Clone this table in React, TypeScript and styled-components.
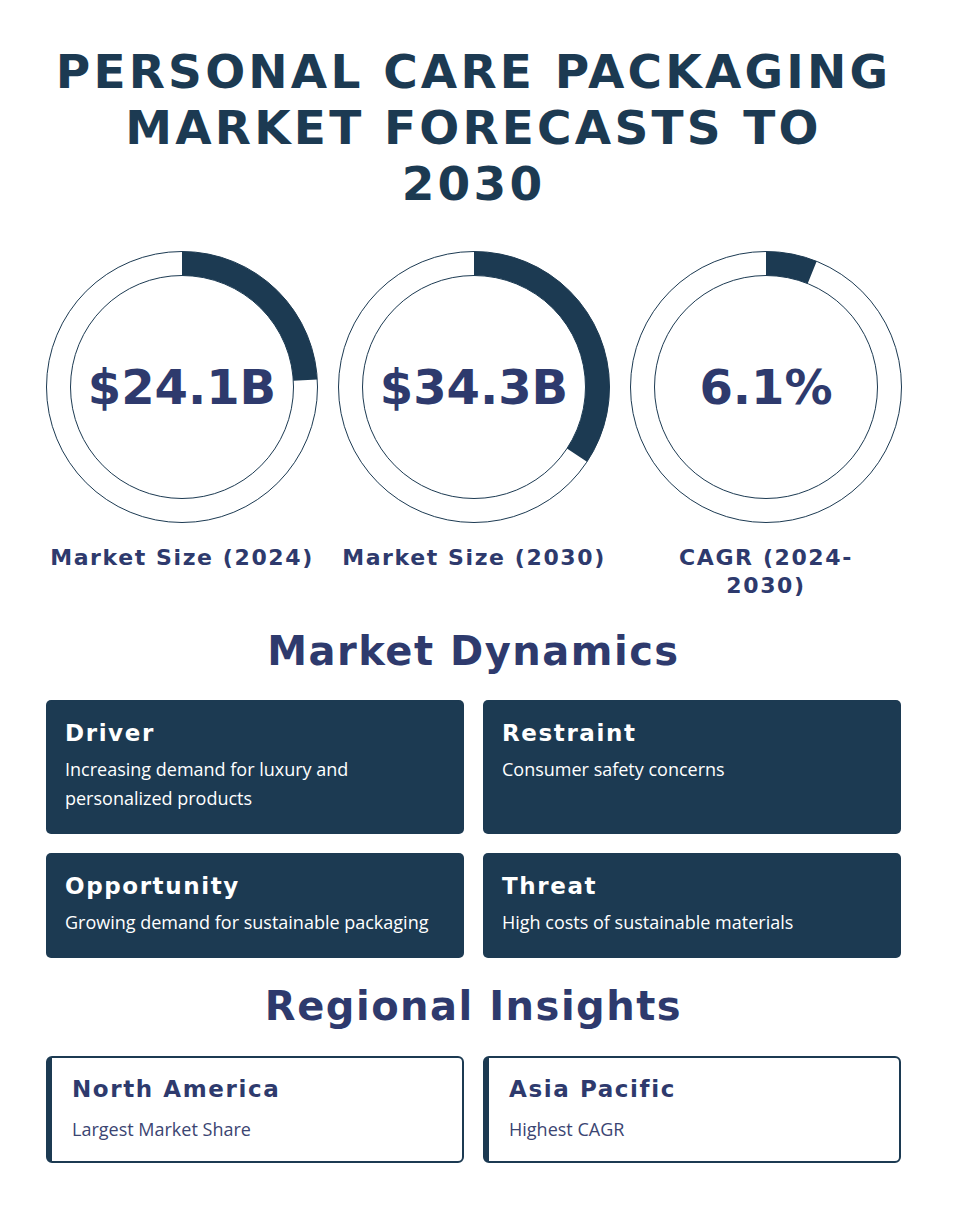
import styled, { createGlobalStyle } from 'styled-components'

const navy = '#1c3a52'
const indigo = '#2e3a6d'
const display = '"DejaVu Sans", "Liberation Sans", sans-serif'
const body = '"Open Sans", "Noto Sans", sans-serif'

const GlobalStyle = createGlobalStyle`
  html, body {
    margin: 0;
    padding: 0;
    background: #ffffff;
  }
`

const Page = styled.main`
  width: 855px;
  margin-left: 46px;
  padding: 44px 0 48px;
  display: flex;
  flex-direction: column;
`

const Title = styled.h1`
  margin: 0;
  font-family: ${display};
  font-weight: 700;
  font-size: 47px;
  line-height: 56px;
  letter-spacing: 3.2px;
  color: ${navy};
  text-align: center;
  text-transform: uppercase;
`

const Stats = styled.section`
  margin-top: 39px;
  display: grid;
  grid-template-columns: repeat(3, 1fr);
  column-gap: 20px;
`

const Stat = styled.div`
  display: flex;
  flex-direction: column;
  align-items: center;
`

const Ring = styled.div`
  position: relative;
  width: 272px;
  height: 272px;
`

const RingValue = styled.span`
  position: absolute;
  inset: 0;
  display: flex;
  align-items: center;
  justify-content: center;
  font-family: ${display};
  font-weight: 700;
  font-size: 48px;
  letter-spacing: 0;
  color: ${indigo};
`

const StatLabel = styled.div`
  margin-top: 21px;
  font-family: ${display};
  font-weight: 700;
  font-size: 22px;
  line-height: 28px;
  letter-spacing: 1.6px;
  color: ${indigo};
  text-align: center;
  white-space: nowrap;
`

const SectionTitle = styled.h2<{ $gap: number }>`
  margin: ${({ $gap }) => $gap}px 0 0;
  font-family: ${display};
  font-weight: 700;
  font-size: 40px;
  line-height: 48px;
  letter-spacing: 1.5px;
  color: ${indigo};
  text-align: center;
`

const CardGrid = styled.section`
  margin-top: 25px;
  display: grid;
  grid-template-columns: 1fr 1fr;
  gap: 19px;
`

const DarkCard = styled.div`
  background: ${navy};
  border-radius: 5px;
  padding: 18px 19px 21px;
`

const CardTitle = styled.h3<{ $light?: boolean }>`
  margin: 0;
  font-family: ${display};
  font-weight: 700;
  font-size: 23px;
  line-height: 30px;
  letter-spacing: 1.6px;
  color: ${({ $light }) => ($light ? '#ffffff' : indigo)};
`

const CardText = styled.p<{ $light?: boolean; $gap?: number }>`
  margin: ${({ $gap }) => $gap ?? 7}px 0 0;
  font-family: ${body};
  font-size: 18px;
  line-height: 29px;
  color: ${({ $light }) => ($light ? '#ffffff' : '#3b4572')};
`

const RegionGrid = styled.section`
  margin-top: 26px;
  display: grid;
  grid-template-columns: 1fr 1fr;
  gap: 19px;
`

const RegionCard = styled.div`
  border: 2px solid ${navy};
  border-left-width: 6px;
  border-radius: 6px;
  padding: 16px 20px 17px;
`

interface StatData {
  value: string
  label: React.ReactNode
  percent: number
}

const stats: StatData[] = [
  { value: '$24.1B', label: 'Market Size (2024)', percent: 24.1 },
  { value: '$34.3B', label: 'Market Size (2030)', percent: 34.3 },
  {
    value: '6.1%',
    label: (
      <>
        CAGR (2024-
        <br />
        2030)
      </>
    ),
    percent: 6.1,
  },
]

const dynamics = [
  { title: 'Driver', text: 'Increasing demand for luxury and personalized products' },
  { title: 'Restraint', text: 'Consumer safety concerns' },
  { title: 'Opportunity', text: 'Growing demand for sustainable packaging' },
  { title: 'Threat', text: 'High costs of sustainable materials' },
]

const regions = [
  { title: 'North America', text: 'Largest Market Share' },
  { title: 'Asia Pacific', text: 'Highest CAGR' },
]

function Donut({ percent }: { percent: number }) {
  const r = 123.5
  const c = 2 * Math.PI * r
  return (
    <svg width="272" height="272" viewBox="0 0 272 272">
      <circle cx="136" cy="136" r="135.5" fill="none" stroke={navy} strokeWidth="1" />
      <circle cx="136" cy="136" r="111.5" fill="none" stroke={navy} strokeWidth="1" />
      <circle
        cx="136"
        cy="136"
        r={r}
        fill="none"
        stroke={navy}
        strokeWidth="24"
        strokeDasharray={`${(c * percent) / 100} ${c}`}
        transform="rotate(-90 136 136)"
      />
    </svg>
  )
}

export default function App() {
  return (
    <>
      <GlobalStyle />
      <Page>
        <Title>
          Personal Care Packaging
          <br />
          Market Forecasts to
          <br />
          2030
        </Title>

        <Stats>
          {stats.map((s, i) => (
            <Stat key={i}>
              <Ring>
                <Donut percent={s.percent} />
                <RingValue>{s.value}</RingValue>
              </Ring>
              <StatLabel>{s.label}</StatLabel>
            </Stat>
          ))}
        </Stats>

        <SectionTitle $gap={27}>Market Dynamics</SectionTitle>
        <CardGrid>
          {dynamics.map((d) => (
            <DarkCard key={d.title}>
              <CardTitle $light>{d.title}</CardTitle>
              <CardText $light>{d.text}</CardText>
            </DarkCard>
          ))}
        </CardGrid>

        <SectionTitle $gap={24}>Regional Insights</SectionTitle>
        <RegionGrid>
          {regions.map((r) => (
            <RegionCard key={r.title}>
              <CardTitle>{r.title}</CardTitle>
              <CardText $gap={11}>{r.text}</CardText>
            </RegionCard>
          ))}
        </RegionGrid>
      </Page>
    </>
  )
}
